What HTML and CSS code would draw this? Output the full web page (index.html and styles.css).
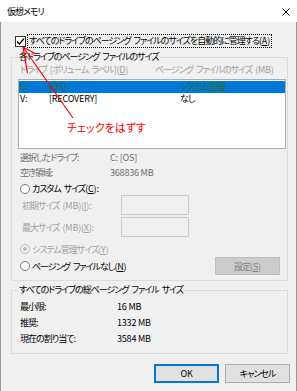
FILE: index.html
```html
<!DOCTYPE html>
<html lang="ja">
<head>
    <meta charset="UTF-8">
    <title>仮想メモリ</title>
    <link rel="stylesheet" href="styles.css">
</head>
<body>

    <div class="titlebar">
        <span class="title">仮想メモリ</span>
        <svg class="close" width="8" height="8" viewBox="0 0 8 8">
            <path d="M0.5 0.5 L7.5 7.5 M7.5 0.5 L0.5 7.5" stroke="#000" stroke-width="1" fill="none"/>
        </svg>
    </div>

    <div class="dialog">
        <div class="auto-row">
            <span class="checkbox">
                <svg width="9" height="9" viewBox="0 0 9 9">
                    <path d="M1 4.5 L3.5 7 L8 1.5" stroke="#000" stroke-width="1.3" fill="none"/>
                </svg>
            </span>
            <span class="focus">すべてのドライブのページング ファイルのサイズを自動的に管理する<span class="en">(<u>A</u>)</span></span>
        </div>

        <fieldset class="group drives">
            <legend>各ドライブのページング ファイルのサイズ</legend>
            <div class="list-head">
                <span>ドライブ <span class="en">[</span>ボリューム ラベル<span class="en">](<u>D</u>)</span></span>
                <span>ページング ファイルのサイズ <span class="en">(MB)</span></span>
            </div>
            <div class="drive-list">
                <div class="drive-row selected"><span class="en">C:</span><span class="en">[OS]</span><span>システム管理</span></div>
                <div class="drive-row"><span class="en">V:</span><span class="en">[RECOVERY]</span><span>なし</span></div>
            </div>
            <div class="info-row"><span>選択したドライブ:</span><span class="en">C: [OS]</span></div>
            <div class="info-row"><span>空き領域:</span><span class="en">368836 MB</span></div>

            <div class="radio-row custom"><span class="radio"></span>カスタム サイズ<span class="en">(<u>C</u>):</span></div>
            <div class="size-row"><span>初期サイズ <span class="en">(MB)(<u>I</u>):</span></span><span class="edit"></span></div>
            <div class="size-row second"><span>最大サイズ <span class="en">(MB)(<u>X</u>):</span></span><span class="edit"></span></div>
            <div class="radio-row system disabled"><span class="radio checked"></span>システム管理サイズ<span class="en">(<u>Y</u>)</span></div>
            <div class="radio-row none">
                <span class="radio"></span>ページング ファイルなし<span class="en">(<u>N</u>)</span>
                <button class="btn set" disabled>設定<span class="en">(<u>S</u>)</span></button>
            </div>
        </fieldset>

        <fieldset class="group totals">
            <legend>すべてのドライブの総ページング ファイル サイズ</legend>
            <div class="total-row first"><span>最小限:</span><span class="en">16 MB</span></div>
            <div class="total-row"><span>推奨:</span><span class="en">1332 MB</span></div>
            <div class="total-row"><span>現在の割り当て:</span><span class="en">3584 MB</span></div>
        </fieldset>

        <div class="buttons">
            <button class="btn default"><span class="en">OK</span></button>
            <button class="btn">キャンセル</button>
        </div>
    </div>

    <!-- 注釈 -->
    <svg class="annotation" width="297" height="391" viewBox="0 0 297 391">
        <path d="M73 118 L23 47 M23 47 L27.5 73 M23 47 L36 54" stroke="#ff0000" stroke-width="1.2" fill="none"/>
    </svg>
    <div class="note">チェックをはずす</div>

</body>
</html>
```

FILE: styles.css
```css
body {
    margin: 0;
    width: 297px;
    height: 391px;
    overflow: hidden;
    background-color: #f0f0f0;
    font-family: "Noto Sans CJK JP", sans-serif;
    font-size: 9px;
    font-feature-settings: "palt";
    letter-spacing: -1px;
    word-spacing: 2px;
    color: #000;
    position: relative;
}

.en {
    letter-spacing: -0.2px;
    word-spacing: 0;
}

u {
    text-decoration: underline;
}

.titlebar {
    height: 22px;
    background-color: #fff;
    display: flex;
    align-items: center;
    justify-content: space-between;
    padding: 1px 7px 0 7px;
    box-sizing: border-box;
}

.title {
    line-height: 12px;
}

.close {
    display: block;
}

.dialog {
    height: 369px;
    border-left: 1px solid #999;
    border-right: 1px solid #999;
    box-sizing: border-box;
    display: flex;
    flex-direction: column;
}

.auto-row {
    display: flex;
    align-items: center;
    margin: 12px 0 0 14px;
    height: 14px;
}

.checkbox {
    width: 11px;
    height: 11px;
    box-sizing: border-box;
    border: 1px solid #333;
    background-color: #fff;
    display: flex;
    align-items: center;
    justify-content: center;
}

.checkbox svg {
    display: block;
}

.focus {
    margin-left: 1px;
    border: 1px dotted #000;
    padding: 0 1px;
    line-height: 12px;
    white-space: nowrap;
}

/* グループ */
.group {
    margin: 3px 8px 0 10px;
    padding: 0 0 5px 0;
    border: 1px solid #dcdcdc;
    min-width: 0;
}

.group legend {
    margin-left: 6px;
    padding: 0 1px;
    line-height: 12px;
}

.totals {
    padding-bottom: 6px;
}

.list-head {
    display: grid;
    grid-template-columns: 135px 1fr;
    margin-top: 1px;
    padding-left: 8px;
    line-height: 12px;
    color: #a0a0a0;
    white-space: nowrap;
}

.drive-list {
    margin: 3px 0 0 6px;
    width: 268px;
    height: 70px;
    box-sizing: border-box;
    border: 1px solid #adadad;
    background-color: #fff;
    padding-top: 1px;
}

.drive-row {
    display: grid;
    grid-template-columns: 29px 131px 1fr;
    padding-left: 1px;
    height: 12px;
    line-height: 12px;
}

.drive-row.selected {
    background-color: #0078d7;
    color: #2f6a1f;
}

.info-row {
    display: grid;
    grid-template-columns: 90px 1fr;
    padding-left: 8px;
    line-height: 15px;
    color: #6d6d6d;
}

.drive-list + .info-row {
    margin-top: 1px;
}

.radio-row {
    display: flex;
    align-items: center;
    padding-left: 8px;
    white-space: nowrap;
}

.radio {
    width: 10px;
    height: 10px;
    box-sizing: border-box;
    border: 1px solid #777;
    border-radius: 50%;
    background-color: #fff;
    margin-right: 2px;
    display: flex;
    align-items: center;
    justify-content: center;
}

.radio.checked::after {
    content: "";
    width: 4px;
    height: 4px;
    border-radius: 50%;
    background-color: #bcbcbc;
}

.radio-row.disabled {
    color: #a0a0a0;
}

.radio-row.disabled .radio {
    border-color: #bcbcbc;
    background-color: #f0f0f0;
}

.custom {
    margin-top: 2px;
    height: 13px;
}

.system {
    margin-top: 5px;
    height: 14px;
}

.none {
    margin-top: 1px;
    height: 18px;
}

.size-row {
    display: grid;
    grid-template-columns: 99px 68px;
    align-items: center;
    padding-left: 10px;
    height: 20px;
    color: #a0a0a0;
}

.size-row.second {
    margin-top: 2px;
}

.edit {
    height: 20px;
    box-sizing: border-box;
    border: 1px solid #cccccc;
    background-color: #f0f0f0;
}

.total-row {
    display: grid;
    grid-template-columns: 97px 1fr;
    padding-left: 8px;
    line-height: 16px;
}

.total-row.first {
    margin-top: 3px;
}

/* ボタン */
.btn {
    font: inherit;
    font-feature-settings: "palt";
    letter-spacing: inherit;
    width: 65px;
    height: 19px;
    box-sizing: border-box;
    border: 1px solid #adadad;
    background-color: #e1e1e1;
    color: #000;
    padding: 0;
    line-height: 15px;
}

.btn.default {
    border-color: #0078d7;
    box-shadow: inset 0 0 0 1px #0078d7;
}

.btn.set {
    height: 18px;
    margin: 0 7px 0 auto;
    background-color: #cccccc;
    border-color: #bfbfbf;
    color: #838383;
}

.buttons {
    display: flex;
    justify-content: flex-end;
    gap: 6px;
    margin: 10px 6px 0 0;
}

/* 注釈 */
.annotation {
    position: absolute;
    left: 0;
    top: 0;
    pointer-events: none;
}

.note {
    position: absolute;
    left: 67px;
    top: 121px;
    font-size: 11px;
    line-height: 12px;
    letter-spacing: 0;
    word-spacing: 0;
    color: #ff0000;
}
```
